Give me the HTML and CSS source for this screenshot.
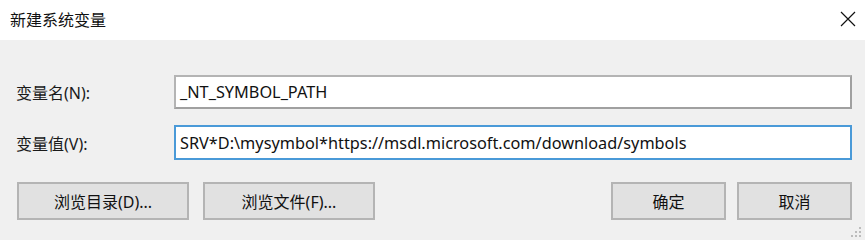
FILE: index.html
```html
<!DOCTYPE html>
<html lang="zh-CN">
<head>
    <meta charset="UTF-8">
    <title>新建系统变量</title>
    <link rel="stylesheet" href="styles.css">
</head>
<body>
    <div class="dialog">
        <div class="titlebar">
            <span class="title">新建系统变量</span>
            <svg class="close" width="16" height="16" viewBox="0 0 16 16">
                <path d="M1 1 L15 15 M15 1 L1 15" stroke="#111" stroke-width="1.2" fill="none"/>
            </svg>
        </div>

        <div class="content">
            <div class="form">
                <label class="label">变量名(N):</label>
                <div class="field">_NT_SYMBOL_PATH</div>

                <label class="label">变量值(V):</label>
                <div class="field focused">SRV*D:\mysymbol*https://msdl.microsoft.com/download/symbols</div>
            </div>

            <div class="buttons">
                <div class="left">
                    <button class="btn wide">浏览目录(D)...</button>
                    <button class="btn wide">浏览文件(F)...</button>
                </div>
                <div class="right">
                    <button class="btn">确定</button>
                    <button class="btn">取消</button>
                </div>
            </div>

            <!-- resize grip -->
            <svg class="grip" width="12" height="12" viewBox="0 0 12 12">
                <rect x="8" y="0" width="2" height="2" fill="#bcbcbc"/>
                <rect x="4" y="4" width="2" height="2" fill="#bcbcbc"/>
                <rect x="8" y="4" width="2" height="2" fill="#bcbcbc"/>
                <rect x="0" y="8" width="2" height="2" fill="#bcbcbc"/>
                <rect x="4" y="8" width="2" height="2" fill="#bcbcbc"/>
                <rect x="8" y="8" width="2" height="2" fill="#bcbcbc"/>
            </svg>
        </div>
    </div>
</body>
</html>
```

FILE: styles.css
```css
* {
    margin: 0;
    padding: 0;
    box-sizing: border-box;
}

body {
    font-family: "Noto Sans", "Noto Sans CJK SC", sans-serif;
    background: #f0f0f0;
    width: 865px;
    height: 240px;
    overflow: hidden;
}

.dialog {
    width: 865px;
    height: 240px;
    display: flex;
    flex-direction: column;
}

.titlebar {
    height: 40px;
    background: #ffffff;
    display: flex;
    align-items: center;
    justify-content: space-between;
    padding: 0 9px 2px 10px;
}

.title {
    font-size: 16px;
    color: #111;
}

.close {
    display: block;
}

.content {
    flex: 1;
    position: relative;
    background: #f0f0f0;
    padding: 35px 13px 0 16px;
}

.form {
    display: grid;
    grid-template-columns: 158px 1fr;
    row-gap: 16px;
    align-items: center;
}

.label {
    font-size: 16px;
    color: #1a1a1a;
}

.field {
    height: 34px;
    background: #fff;
    border: 2px solid #a0a0a0;
    border-top-color: #b4b4b4;
    border-left-color: #b4b4b4;
    padding: 0 0 0 4px;
    font-size: 16.3px;
    color: #111;
    display: flex;
    align-items: center;
    white-space: nowrap;
}

.field.focused {
    height: 35px;
    border-color: #4a9ad8;
}

.buttons {
    display: flex;
    justify-content: space-between;
    margin-top: 22px;
    padding-left: 1px;
}

.left,
.right {
    display: flex;
    gap: 14px;
}

.right {
    gap: 11px;
}

.btn {
    width: 115px;
    height: 38px;
    background: #e1e1e1;
    border: 2px solid #b4b4b4;
    font-family: inherit;
    font-size: 16px;
    color: #111;
}

.btn.wide {
    width: 172px;
}

.grip {
    position: absolute;
    right: 2px;
    bottom: 1px;
}
```
